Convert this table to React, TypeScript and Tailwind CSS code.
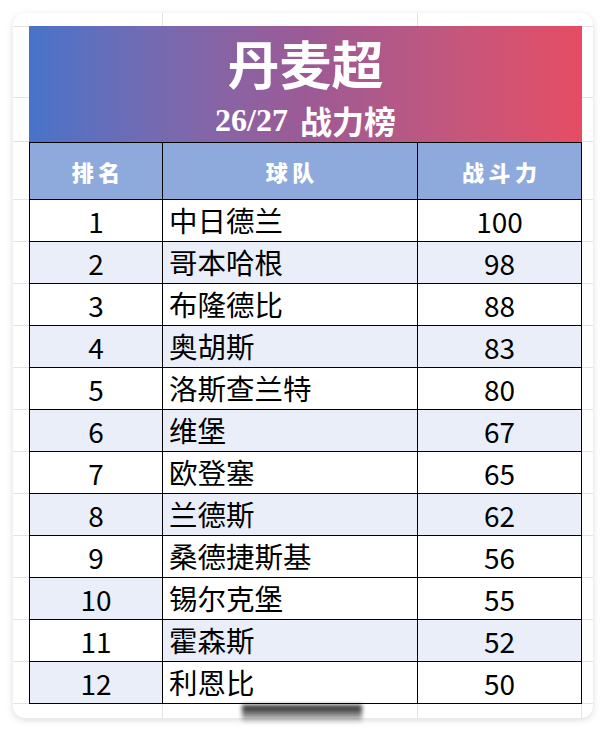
import React from 'react';

type Row = { rank: number; team: string; power: number; rankTint: boolean; restTint: boolean };

const rows: Row[] = [
  { rank: 1, team: '中日德兰', power: 100, rankTint: false, restTint: false },
  { rank: 2, team: '哥本哈根', power: 98, rankTint: true, restTint: true },
  { rank: 3, team: '布隆德比', power: 88, rankTint: false, restTint: false },
  { rank: 4, team: '奥胡斯', power: 83, rankTint: true, restTint: true },
  { rank: 5, team: '洛斯查兰特', power: 80, rankTint: false, restTint: false },
  { rank: 6, team: '维堡', power: 67, rankTint: true, restTint: true },
  { rank: 7, team: '欧登塞', power: 65, rankTint: false, restTint: false },
  { rank: 8, team: '兰德斯', power: 62, rankTint: true, restTint: true },
  { rank: 9, team: '桑德捷斯基', power: 56, rankTint: false, restTint: false },
  { rank: 10, team: '锡尔克堡', power: 55, rankTint: true, restTint: false },
  { rank: 11, team: '霍森斯', power: 52, rankTint: false, restTint: true },
  { rank: 12, team: '利恩比', power: 50, rankTint: true, restTint: false },
];

const sans = "font-['Noto_Sans_CJK_SC','Noto_Sans',sans-serif]";

const App: React.FC = () => {
  return (
    <div className="relative w-[608px] h-[732px] bg-white">
      <div className="absolute left-[13px] top-[13px] w-[580px] h-[705px] rounded-xl bg-white shadow-[0_2px_7px_rgba(0,0,0,0.14)] overflow-hidden">
        <div className="grid grid-cols-[16px_134px_255px_164px_11px] grid-rows-[13px_72px_44px_58px_repeat(12,42px)_14px]">
          {/* top strip */}
          <div />
          <div className="border-r border-[#e3e3e3]" />
          <div className="border-r border-[#e3e3e3]" />
          <div />
          <div />

          {/* title */}
          <div className="border-t border-b border-[#e3e3e3]" />
          <div className="col-span-3 row-span-2 flex flex-col items-center bg-gradient-to-r from-[#4673c9] via-[#9c5a95] to-[#e64c63] text-white">
            <div className="h-[72px] flex items-center justify-center text-[52px] font-bold leading-none font-['Noto_Sans_CJK_SC',serif] pt-[2px]">
              丹麦超
            </div>
            <div className="h-[44px] flex items-center justify-center text-[32px] font-bold leading-none font-['Liberation_Serif','Noto_Sans_CJK_SC',serif] gap-[12px]">
              <span>26/27</span>
              <span className="font-['Noto_Sans_CJK_SC',serif]">战力榜</span>
            </div>
          </div>
          <div className="border-t border-b border-[#e3e3e3]" />
          <div className="border-b border-[#e3e3e3]" />
          <div className="border-b border-[#e3e3e3]" />

          {/* header */}
          <div className="border-b border-[#e3e3e3]" />
          {['排名', '球队', '战斗力'].map((h, i) => (
            <div
              key={h}
              className={`flex items-center justify-center bg-[#8eaadc] border-t border-b border-r border-black text-white text-[22px] font-black tracking-[0.2em] pl-[0.2em] ${sans} ${i === 0 ? 'border-l' : ''}`}
            >
              {h}
            </div>
          ))}
          <div className="border-b border-[#e3e3e3]" />

          {/* rows */}
          {rows.map((r) => (
            <React.Fragment key={r.rank}>
              <div className="border-b border-[#e3e3e3]" />
              <div
                className={`flex items-center justify-center border-l border-r border-b border-black text-[28px] text-black ${sans} ${r.rankTint ? 'bg-[#e9eef9]' : 'bg-white'}`}
              >
                {r.rank}
              </div>
              <div
                className={`flex items-center pl-[6px] border-r border-b border-black text-[28.5px] text-black ${sans} ${r.restTint ? 'bg-[#e9eef9]' : 'bg-white'}`}
              >
                {r.team}
              </div>
              <div
                className={`flex items-center justify-center border-r border-b border-black text-[28px] text-black ${sans} ${r.restTint ? 'bg-[#e9eef9]' : 'bg-white'}`}
              >
                {r.power}
              </div>
              <div className="border-b border-[#e3e3e3]" />
            </React.Fragment>
          ))}

          {/* bottom strip */}
          <div />
          <div className="border-r border-[#e3e3e3]" />
          <div className="border-r border-[#e3e3e3]" />
          <div className="border-r border-[#e3e3e3]" />
          <div />
        </div>
      </div>
      {/* smudge below table */}
      <div className="absolute left-[242px] top-[705px] w-[120px] h-[18px] bg-gradient-to-b from-black/90 via-black/50 to-black/0 blur-[2px]" />
    </div>
  );
};

export default App;
